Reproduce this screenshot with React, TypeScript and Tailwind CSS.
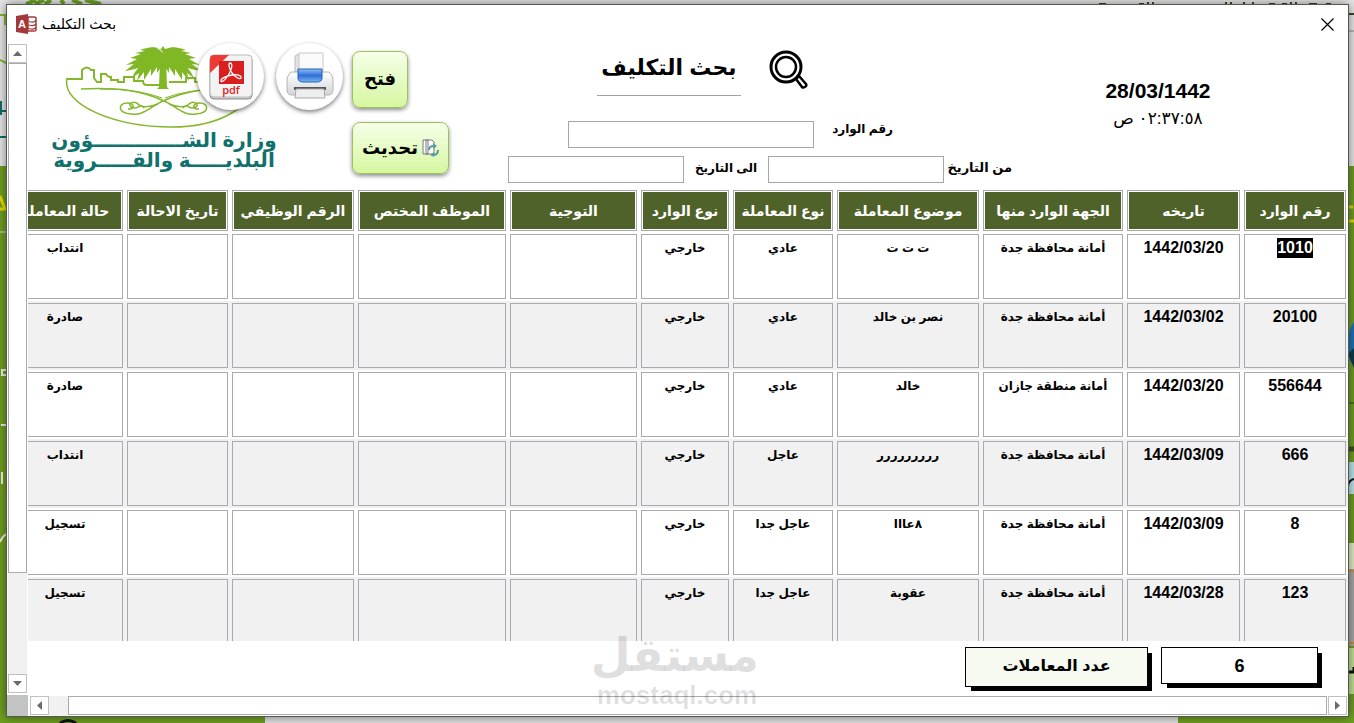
import type { ReactNode } from "react";
import { clsx } from "clsx";

type Row = {
  id: string;
  date: string;
  from: string;
  subject: string;
  kind: string;
  type: string;
  status: string;
};

const columns = [
  { title: "رقم الوارد", width: "w-[106px]" },
  { title: "تاريخه", width: "w-[117px]" },
  { title: "الجهة الوارد منها", width: "w-[144px]" },
  { title: "موضوع المعاملة", width: "w-[146px]" },
  { title: "نوع المعاملة", width: "w-[104px]" },
  { title: "نوع الوارد", width: "w-[92px]" },
  { title: "التوجية", width: "w-[131px]" },
  { title: "الموظف المختص", width: "w-[152px]" },
  { title: "الرقم الوظيفي", width: "w-[126px]" },
  { title: "تاريخ الاحالة", width: "w-[105px]" },
  { title: "حالة المعاملة", width: "w-[120px]" },
];

const rows: Row[] = [
  { id: "1010", date: "1442/03/20", from: "أمانة محافظة جدة", subject: "ت ت ت", kind: "عادي", type: "خارجي", status: "انتداب" },
  { id: "20100", date: "1442/03/02", from: "أمانة محافظة جدة", subject: "نصر بن خالد", kind: "عادي", type: "خارجي", status: "صادرة" },
  { id: "556644", date: "1442/03/20", from: "أمانة منطقة جازان", subject: "خالد", kind: "عادي", type: "خارجي", status: "صادرة" },
  { id: "666", date: "1442/03/09", from: "أمانة محافظة جدة", subject: "ررررررررر", kind: "عاجل", type: "خارجي", status: "انتداب" },
  { id: "8", date: "1442/03/09", from: "أمانة محافظة جدة", subject: "٨عااا", kind: "عاجل جدا", type: "خارجي", status: "تسجيل" },
  { id: "123", date: "1442/03/28", from: "أمانة محافظة جدة", subject: "عقوبة", kind: "عاجل جدا", type: "خارجي", status: "تسجيل" },
];

const Backdrop = () => (
  <div className="absolute inset-0 flex flex-col overflow-hidden" aria-hidden="true">
    <div className="h-[166px] bg-[#e8e8e8]" />
    <div className="flex-1 bg-[#6f9f22]" />
    <div className="h-[6px] flex">
      <div className="w-[265px] bg-[#6f9f22]" />
      <div className="flex-1 bg-[#e2e2e2]" />
      <div className="w-[176px] bg-[#6f9f22]" />
    </div>
    <svg className="absolute left-0 top-0" width="110" height="723" fill="none">
      <path d="M0 15h5v9h2M0 60l6 3" stroke="#82b92c" strokeWidth="2" />
      <path d="M26 4l10-4M35 4l9-4M45 4l6-4M61 0l3 4M72 0l10 4M85 0l16 4" stroke="#6fa527" strokeWidth="4" />
      <path d="M1 101v14M0 111h7M0 137h7" stroke="#0f716b" strokeWidth="2" />
      <path d="M0 196l5 13H0" stroke="#e8e000" strokeWidth="3" />
      <path d="M0 232h7" stroke="#d8d8d8" />
      <path d="M6 370H2v5h4M6 425H1M2 472v12M6 534q-4 3-6 8" stroke="#eef3e4" strokeWidth="2" />
      <path d="M60 723q8-5 16 0" stroke="#111" strokeWidth="3" />
    </svg>
    <svg className="absolute right-0 top-0" width="260" height="723" fill="none">
      <path d="M5 4h7M45 4h5M54 2v3M59 2v3M132 4V2M137 2v3M150 4V2M159 4V2M175 4h6M188 4h5M197 2v3M202 2v3M215 4h8M232 4h5M254 14h6" stroke="#3c4a22" strokeWidth="2" />
      <path d="M254 31h6" stroke="#8a8a8a" />
      <path d="M255 207h4M254 221h6" stroke="#e0dc00" strokeWidth="3" />
      <path d="M260 322q-8 10-6 34l6 12z" fill="#1c74b4" />
      <path d="M260 348l-6 6 6 14z" fill="#12384e" />
      <path d="M254 403h6" stroke="#33491a" />
      <path d="M254 449h6" stroke="#41521f" strokeWidth="5" />
      <path d="M254 462h6v32h-6z" fill="#b9e6ec" />
      <path d="M254 486q1-6 6-7" stroke="#111" strokeWidth="2" />
      <path d="M254 543h6v26h-6z" fill="#dfeec2" />
      <path d="M254 569h6v77h-6z" fill="#a8a8a8" />
      <path d="M254 571h6M254 643h6" stroke="#d0903c" strokeWidth="2" />
      <path d="M254 648h6v46h-6z" fill="#c4e191" />
      <path d="M254 672h6v-5" stroke="#111" strokeWidth="3" />
    </svg>
  </div>
);

const AccessIcon = () => (
  <svg width="22" height="20" viewBox="0 0 22 20">
    <path d="M12 3h6q2 0 2 1v12q0 1-2 1h-6z" fill="#fff" stroke="#a4373a" strokeWidth="1.5" />
    <path d="M13 7.500q5 1.500 7-1M13 11q5 1.500 7-1M13 14.500q5 1.500 7-1" fill="none" stroke="#a4373a" strokeWidth="1.300" />
    <path d="M0 2l12-2v20L0 18z" fill="#a4373a" />
    <text x="6" y="14" textAnchor="middle" fontSize="11" fontWeight="700" fill="#fff" fontFamily="Liberation Sans">A</text>
  </svg>
);

const Emblem = () => (
  <svg width="200" height="86" viewBox="64 44 200 86" fill="none" stroke="#84b82a">
    <path strokeWidth="2" d="M67 79h15v-9q5-5 9 0h3v8l3 4h4v-8h5q1 3 5 3v3h7v2h6v-5h10v4h9q0 4 4 4h13M169 82h17v-4h9v4h12v-6h14v6h10v-8h10v8h12" />
    <path strokeWidth="1.500" d="M67 78c-6 27 48 49 105 49 46 0 76-18 84-42" />
    <g fill="#7fb725" stroke="none">
      <path d="M160 60h6l1 27 2 2h-12l2-2z" />
      <path d="M163 54c-3-7-13-8-23-4l5 1-10 2 6 1-11 4 7 1-11 6 8-1-9 7c11-2 26-6 38-12z" />
      <path d="M163 54c3-7 13-8 23-4l-5 1 10 2-6 1 11 4-7 1 11 6-8-1 9 7c-11-2-26-6-38-12z" />
      <path d="M163 53c-2-5-8-7-16-5l9 4zM163 53c2-5 8-7 16-5l-9 4zM163 57l-6-9 4 1 2-3 2 3 4-1z" />
      <path d="M163 55c-13 3-25 9-31 23l7-5-2 8 7-9v8l7-11v7l6-9v6l6-9 6 9v-6l6 9v-7l7 11v-8l7 9-2-8 7 5c-6-14-18-20-31-23z" />
    </g>
    <path strokeWidth="1.500" d="M81 89c38-2 62 2 83 12 12 5 19 15 32 13 14-1 13-11 4-11-9 0-7 7-1 6M246 89c-38-2-61 2-83 12-12 5-19 15-32 13-14-1-13-11-4-11 9 0 7 7 1 6" />
    <path strokeWidth="1.500" d="M144 108c-4-6-6 3-13-1-4-3 3-7 7-3 3 4 13 3 20 0M183 108c4-6 6 3 13-1 4-3-3-7-7-3-3 4-13 3-20 0" />
    <path d="M100 89c28 0 45 3 62 9M227 89c-28 0-45 3-62 9" />
  </svg>
);

const PdfIcon = () => (
  <svg width="46" height="46" viewBox="0 0 46 46">
    <rect x="2" y="2" width="42" height="43" rx="4" fill="#d0d0d0" stroke="#888" />
    <rect x="2" y="1" width="42" height="42" rx="4" fill="#f3f3f3" stroke="#bbb" />
    <path d="M2 19V5q0-4 4-4h15z" fill="#ee3a34" />
    <path d="M11 7h25v23H11z" fill="#d91f1f" />
    <path d="M22 9c3 0 2 6-1 11-3 5-7 9-8 7s5-5 11-6 10 1 9 3-6-1-9-5-4-10-2-10z" fill="none" stroke="#fff" strokeWidth="1.300" />
    <text x="23" y="40" textAnchor="middle" fontSize="11" fontWeight="600" fill="#d22" fontFamily="Open Sans">pdf</text>
  </svg>
);

const PrinterIcon = () => (
  <svg width="50" height="50" viewBox="0 0 50 50">
    <defs>
      <linearGradient id="ink" x1="0" y1="0" x2="0" y2="1">
        <stop offset="0" stopColor="#8fbef2" />
        <stop offset=".5" stopColor="#2f70d8" />
        <stop offset="1" stopColor="#78b4f0" />
      </linearGradient>
      <linearGradient id="shell" x1="0" y1="0" x2="0" y2="1">
        <stop offset="0" stopColor="#ffffff" />
        <stop offset="1" stopColor="#d2d5d8" />
      </linearGradient>
    </defs>
    <path d="M10 4q3-2 6-2v18h-6z" fill="#e2e2e2" stroke="#bbb" />
    <path d="M14 1h24v20H14z" fill="#fafafa" stroke="#c8c8c8" />
    <path d="M6 20h38q3 2 4 7v11q0 5-5 5H7q-5 0-5-5V27q1-5 4-7z" fill="url(#shell)" stroke="#b4b4b4" />
    <path d="M13 17h24v9q0 4-5 4H18q-5 0-5-4z" fill="url(#ink)" stroke="#2460b8" />
    <path d="M9 35h32v3H9z" fill="#555" />
    <path d="M11 37h28l1 9H10z" fill="#eee" stroke="#aaa" />
  </svg>
);

const RefreshIcon = () => (
  <svg width="17" height="18" viewBox="0 0 17 18" fill="none">
    <path d="M1 1h5v14H1zM4 1h6l2 2v12H4z" fill="#fff" stroke="#777" />
    <path d="M7 11q0-4 5-4M16 11q0 5-5 5" stroke="#5a9aa8" strokeWidth="2" />
    <path d="M11 4l4 3-4 3zM12 13v5l-4-2z" fill="#5a9aa8" />
  </svg>
);

const SearchIcon = () => (
  <svg width="40" height="40" viewBox="0 0 40 40" fill="none" stroke="#000">
    <circle cx="18" cy="17" r="15" strokeWidth="3" />
    <circle cx="18" cy="17" r="10" strokeWidth="2.500" />
    <path d="M28 29l3-3 7 8q1 2-1 3t-3 0z" strokeWidth="2.500" strokeLinejoin="round" />
  </svg>
);

const ScrollButton = ({ label, d }: { label: string; d: string }) => (
  <button aria-label={label} className="size-[19px] shrink-0 flex items-center justify-center bg-white border border-[#c0c0c0]">
    <svg width="9" height="9" viewBox="0 0 9 9">
      <path d={d} fill="#6b6b6b" />
    </svg>
  </button>
);

const roundButton = "size-[67px] shrink-0 flex items-center justify-center rounded-full bg-white shadow-[0_2px_4px_rgba(0,0,0,0.5)]";
const greenButton = "flex items-center justify-center rounded-lg border border-[#9cc35b] bg-linear-to-b from-[#f6ffe8] to-[#d6f7a0] shadow-[0_2px_4px_rgba(0,0,0,0.45)] font-bold text-[18px]";
const textBox = "h-[27px] border border-[#a6a6a6] bg-white px-1 text-sm outline-none";

const SearchHeader = () => (
  <header className="h-[145px] shrink-0 flex items-start">
    <div className="mt-px ml-[25px] w-[222px] shrink-0 flex flex-col items-center text-[#0f716b]">
      <Emblem />
      <p dir="rtl" className="text-[20px] leading-5 font-bold text-center whitespace-nowrap">
        وزارة الشـــــــــــــؤون
        <br />
        البلديـــــة والقـــــروية
      </p>
    </div>
    <div className="relative -ml-[78px] flex items-start gap-3">
      <button aria-label="pdf" className={roundButton}>
        <PdfIcon />
      </button>
      <button aria-label="طباعة" className={roundButton}>
        <PrinterIcon />
      </button>
      <div className="-ml-[3px] mt-2 flex flex-col items-start gap-[14px]">
        <button className={clsx(greenButton, "h-[57px] w-14")}>فتح</button>
        <button dir="ltr" className={clsx(greenButton, "h-[52px] w-[97px] gap-1")}>
          تحديث
          <RefreshIcon />
        </button>
      </div>
    </div>
    <form dir="rtl" className="ml-[59px] w-[504px] shrink-0 flex flex-col">
      <div className="mt-[7px] mr-[204px] h-[46px] flex items-start gap-[27px]">
        <SearchIcon />
        <h1 className="h-[46px] w-36 border-b border-[#a0a0a0] text-center text-[22px] leading-9 font-bold whitespace-nowrap">بحث التكليف</h1>
      </div>
      <div className="mt-[25px] mr-[119px] flex items-start gap-5">
        <label htmlFor="incoming" className="w-[59px] text-[12px] leading-4 font-bold whitespace-nowrap">رقم الوارد</label>
        <input id="incoming" className={clsx(textBox, "w-[246px]")} />
      </div>
      <div className="mt-2 flex items-start">
        <label htmlFor="from" className="w-[68px] text-[13px] leading-6 font-bold whitespace-nowrap">من التاريخ</label>
        <input id="from" className={clsx(textBox, "w-44")} />
        <label htmlFor="to" className="w-[84px] text-center text-[12px] leading-6 font-bold whitespace-nowrap">الى التاريخ</label>
        <input id="to" className={clsx(textBox, "w-44")} />
      </div>
    </form>
    <div className="mt-9 flex-1 pr-[44px] text-center">
      <p className="text-[21px] leading-6 font-bold">28/03/1442</p>
      <p dir="rtl" className="mt-1 text-[17px] leading-6">٠٢:٣٧:٥٨ ص</p>
    </div>
  </header>
);

const Cell = ({ children }: { children?: ReactNode }) => (
  <td className="p-[2px]">
    <div className="h-[65px] border border-[#a9a9b0] pt-[3px] text-center leading-5 whitespace-nowrap">{children}</div>
  </td>
);

const Results = () => (
  <div dir="rtl" className="flex-1 min-h-0 overflow-hidden">
    <table className="table-fixed border-collapse w-[1343px]">
      <thead>
        <tr>
          {columns.map((c) => (
            <th key={c.title} className={clsx(c.width, "px-[2px] pt-[2px] pb-px")}>
              <div className="h-[41px] border border-[#a9a9b0] bg-white p-px">
                <div className="h-full flex items-center justify-center bg-[#4f622a] text-sm font-bold text-white whitespace-nowrap">{c.title}</div>
              </div>
            </th>
          ))}
        </tr>
      </thead>
      <tbody className="text-[12px] font-bold">
        {rows.map((r, i) => (
          <tr key={r.id} className={i % 2 ? "bg-[#f1f1f1]" : "bg-white"}>
            <Cell>
              <span className={clsx("inline-block text-[16px] leading-5", i === 0 && "bg-black text-white")}>{r.id}</span>
            </Cell>
            <Cell>
              <span dir="ltr" className="inline-block text-[16px] leading-5">{r.date}</span>
            </Cell>
            <Cell>{r.from}</Cell>
            <Cell>{r.subject}</Cell>
            <Cell>{r.kind}</Cell>
            <Cell>{r.type}</Cell>
            <Cell />
            <Cell />
            <Cell />
            <Cell />
            <Cell>{r.status}</Cell>
          </tr>
        ))}
      </tbody>
    </table>
  </div>
);

const App = () => {
  return (
    <div className="relative h-screen overflow-hidden pt-1 pr-[5px] pb-[6px] pl-[6px] font-['Liberation_Sans','DejaVu_Sans',sans-serif] text-black">
      <Backdrop />
      <main className="relative h-full flex flex-col border border-[#55584e] bg-white shadow-[0_0_10px_rgba(0,0,0,0.5)]">
        <div className="h-[38px] shrink-0 flex items-center justify-between pl-[9px] pr-[14px]">
          <div className="flex items-center gap-1">
            <AccessIcon />
            <span className="text-sm">بحث التكليف</span>
          </div>
          <button aria-label="إغلاق">
            <svg width="13" height="13" viewBox="0 0 13 13" stroke="#000" strokeWidth="1.200">
              <path d="M.5.5l12 12M12.500.5l-12 12" />
            </svg>
          </button>
        </div>
        <div className="flex-1 min-h-0 flex">
          <div className="mt-px mb-[2px] mr-px ml-px w-[19px] shrink-0 flex flex-col">
            <ScrollButton label="أعلى" d="M0 7l4.500-5L9 7z" />
            <div className="flex-[510] border border-[#a9a9b0] bg-white" />
            <div className="flex-[102] bg-[#f1f1f1]" />
            <ScrollButton label="أسفل" d="M0 2l4.500 5L9 2z" />
          </div>
          <div className="flex-1 min-w-0 flex flex-col">
            <SearchHeader />
            <Results />
            <footer dir="rtl" className="h-[54px] shrink-0 flex items-start gap-[13px] pt-[6px] pr-[30px] font-bold">
              <output id="total" className="h-[37px] w-[157px] border border-black bg-white text-center text-[18px] leading-9 shadow-[5px_5px_0_-1px_#000]">6</output>
              <label htmlFor="total" className="h-10 w-[183px] border border-black bg-[#f7faf0] text-center text-[16px] leading-9 shadow-[5px_5px_0_-1px_#000]">عدد المعاملات</label>
            </footer>
          </div>
        </div>
        <div className="h-[21px] shrink-0 flex">
          <div className="w-[21px] bg-[#c2c4c4]" />
          <div className="flex-1 flex pt-px pl-[2px] pr-px">
            <ScrollButton label="يسار" d="M7 0v9L2 4.500z" />
            <div className="w-[19px] bg-[#f1f1f1]" />
            <div className="h-[19px] flex-1 mr-px border border-[#a9a9b0] bg-white" />
            <ScrollButton label="يمين" d="M2 0v9l5-4.500z" />
          </div>
        </div>
      </main>
      <div className="pointer-events-none absolute left-1/2 bottom-4 w-[164px] -ml-[82px] text-center text-black/12 font-bold">
        <p dir="rtl" className="text-[46px] leading-[56px]">مستقل</p>
        <p className="text-[26px] leading-6">mostaql.com</p>
      </div>
    </div>
  );
};

export default App;
